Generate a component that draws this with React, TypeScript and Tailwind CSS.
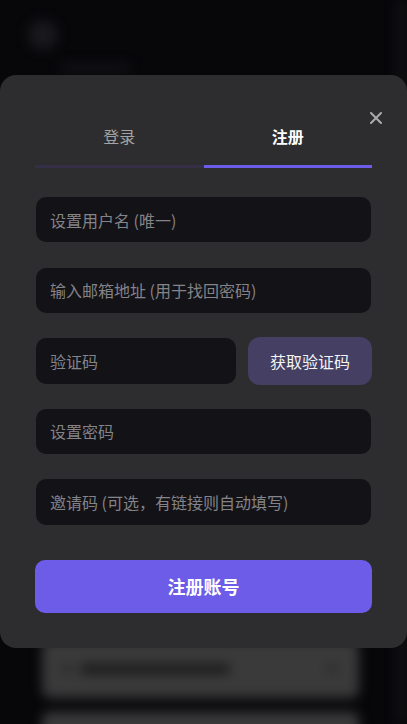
import React, { useState } from "react";

export default function App() {
  const [tab, setTab] = useState<"login" | "register">("register");
  return (
    <div className="relative h-[724px] w-full overflow-hidden bg-[#07070a] font-['Noto_Sans_CJK_SC','Noto_Sans',sans-serif]">
      {/* blurred page behind */}
      <div className="absolute inset-0 blur-[6px]">
        <div className="flex items-center gap-3 px-[28px] pt-[20px]">
          <div className="h-[30px] w-[30px] rounded-full bg-[#19191c]" />
        </div>
        <div className="ml-[60px] mt-[14px] h-[8px] w-[70px] rounded bg-[#141417]" />
        <div className="absolute right-0 top-0 h-full w-[10px] bg-[#121214]" />
        <div className="absolute left-[42px] right-[48px] top-[640px] flex h-[58px] flex-col justify-center rounded-lg bg-[#3a3a3b] px-[20px]">
          <div className="flex items-center gap-2">
            <div className="h-[10px] w-[10px] rounded bg-[#2a2a2b]" />
            <div className="h-[10px] w-[150px] rounded bg-[#1a1a1b]" />
            <div className="ml-auto h-[8px] w-[14px] rounded bg-[#2c2c2d]" />
          </div>
        </div>
        <div className="absolute left-[42px] right-[48px] top-[712px] h-[40px] rounded-lg bg-[#3a3a3b]" />
      </div>

      {/* modal */}
      <div className="absolute left-0 right-0 top-[75px] rounded-[16px] bg-[#2d2d2f] px-[35px] pb-[35px] pt-[38px]">
        <button className="absolute right-[25px] top-[37px] h-[12px] w-[12px]" aria-label="关闭">
          <svg viewBox="0 0 12 12" className="h-[12px] w-[12px]">
            <path d="M1 1L11 11M11 1L1 11" stroke="#ababab" strokeWidth="2" strokeLinecap="round" />
          </svg>
        </button>

        <div className="flex">
          <button
            onClick={() => setTab("login")}
            className={`flex-1 pt-[11px] pb-[17px] text-[16px] leading-6 border-b-[3px] ${
              tab === "login" ? "border-[#6c5ce7] text-white font-bold" : "border-[#342f47] text-[#a3a3a3]"
            }`}
          >
            登录
          </button>
          <button
            onClick={() => setTab("register")}
            className={`flex-1 pt-[11px] pb-[17px] text-[16px] leading-6 border-b-[3px] ${
              tab === "register" ? "border-[#6c5ce7] text-white font-bold" : "border-[#342f47] text-[#a3a3a3]"
            }`}
          >
            注册
          </button>
        </div>

        <div className="mt-[29px] flex flex-col gap-[25.5px] px-px">
          <input
            className="h-[45px] w-full rounded-[10px] bg-[#131217] px-[14px] text-[16px] text-white outline-none placeholder:text-[#838388]"
            placeholder="设置用户名 (唯一)"
          />
          <input
            className="h-[45px] w-full rounded-[10px] bg-[#131217] px-[14px] text-[16px] text-white outline-none placeholder:text-[#838388]"
            placeholder="输入邮箱地址 (用于找回密码)"
          />
          <div className="flex h-[45px] items-center gap-[12px]">
            <input
              className="h-[46px] w-[200px] rounded-[10px] bg-[#131217] px-[14px] text-[16px] text-white outline-none placeholder:text-[#838388]"
              placeholder="验证码"
            />
            <button className="-mr-px h-[48px] flex-1 rounded-[12px] bg-[#443f63] text-[16px] font-normal text-[#f4f4f4]">
              获取验证码
            </button>
          </div>
          <input
            className="h-[45px] w-full rounded-[10px] bg-[#131217] px-[14px] text-[16px] text-white outline-none placeholder:text-[#838388]"
            placeholder="设置密码"
          />
          <input
            className="h-[46px] w-full rounded-[10px] bg-[#131217] px-[14px] text-[16px] text-white outline-none placeholder:text-[#838388]"
            placeholder="邀请码 (可选，有链接则自动填写)"
          />
        </div>

        <button className="mt-[35px] h-[53px] w-full rounded-[10px] bg-[#6c5ce7] text-[18px] font-bold text-white">
          注册账号
        </button>
      </div>
    </div>
  );
}
